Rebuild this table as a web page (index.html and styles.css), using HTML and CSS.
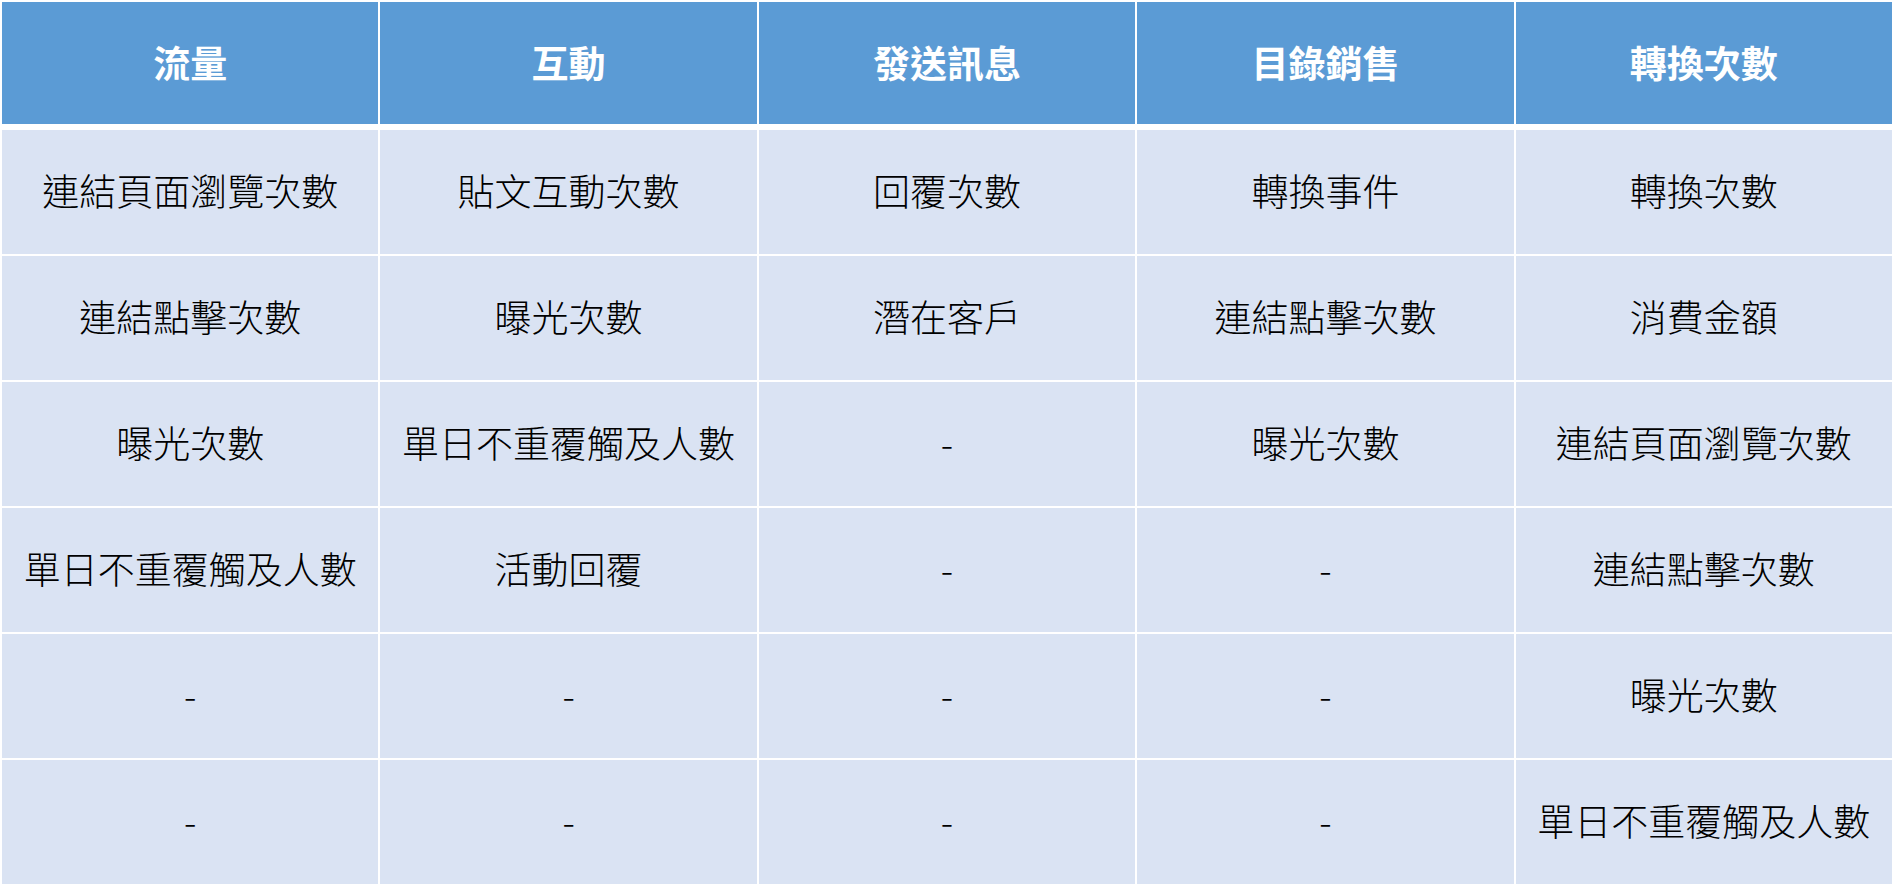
FILE: index.html
```html
<!DOCTYPE html>
<html lang="zh-Hant">
<head>
<meta charset="utf-8">
<title>指標表</title>
<link rel="stylesheet" href="styles.css">
</head>
<body>
<div class="table">
  <div class="head-row">
    <div class="cell head">流量</div>
    <div class="cell head">互動</div>
    <div class="cell head">發送訊息</div>
    <div class="cell head">目錄銷售</div>
    <div class="cell head">轉換次數</div>
  </div>
  <div class="body-rows">
    <div class="cell">連結頁面瀏覽次數</div>
    <div class="cell">貼文互動次數</div>
    <div class="cell">回覆次數</div>
    <div class="cell">轉換事件</div>
    <div class="cell">轉換次數</div>

    <div class="cell">連結點擊次數</div>
    <div class="cell">曝光次數</div>
    <div class="cell">潛在客戶</div>
    <div class="cell">連結點擊次數</div>
    <div class="cell">消費金額</div>

    <div class="cell">曝光次數</div>
    <div class="cell">單日不重覆觸及人數</div>
    <div class="cell">-</div>
    <div class="cell">曝光次數</div>
    <div class="cell">連結頁面瀏覽次數</div>

    <div class="cell">單日不重覆觸及人數</div>
    <div class="cell">活動回覆</div>
    <div class="cell">-</div>
    <div class="cell">-</div>
    <div class="cell">連結點擊次數</div>

    <div class="cell">-</div>
    <div class="cell">-</div>
    <div class="cell">-</div>
    <div class="cell">-</div>
    <div class="cell">曝光次數</div>

    <div class="cell">-</div>
    <div class="cell">-</div>
    <div class="cell">-</div>
    <div class="cell">-</div>
    <div class="cell">單日不重覆觸及人數</div>
  </div>
</div>
</body>
</html>
```

FILE: styles.css
```css
html, body {
  margin: 0;
  padding: 0;
  background: #ffffff;
}
body {
  padding: 2px 0 0 2px;
  font-family: "Noto Sans CJK TC", "Noto Sans", sans-serif;
}
.table {
  width: 1890px;
  display: flex;
  flex-direction: column;
  gap: 6px;
}
.head-row {
  display: grid;
  grid-template-columns: repeat(5, 1fr);
  column-gap: 2px;
  height: 122px;
}
.body-rows {
  display: grid;
  grid-template-columns: repeat(5, 1fr);
  grid-auto-rows: 124px;
  gap: 2px;
}
.cell {
  display: flex;
  align-items: center;
  justify-content: center;
  padding-bottom: 4px;
  box-sizing: border-box;
  background: #dae3f3;
  color: #000000;
  font-size: 37px;
  font-weight: 300;
  line-height: 1;
  white-space: nowrap;
}
.cell.head {
  padding-bottom: 2px;
  background: #5b9bd5;
  color: #ffffff;
  font-weight: 700;
}
```
